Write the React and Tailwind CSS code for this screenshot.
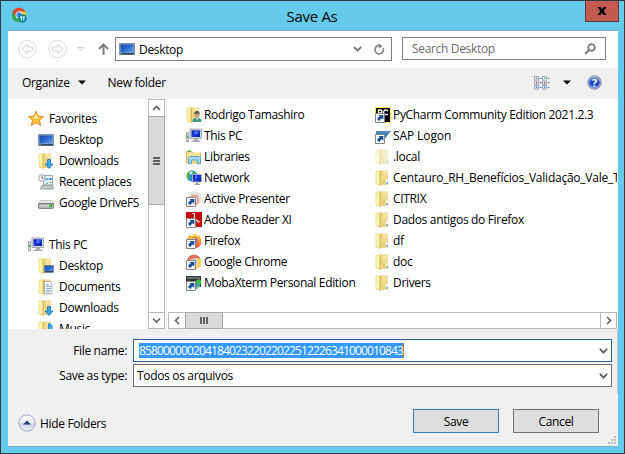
import React from "react";

const Svg = ({ w = 16, h = 16, children, className = "" }) => (
  <svg width={w} height={h} viewBox={`0 0 ${w} ${h}`} className={`block shrink-0 ${className}`}>
    {children}
  </svg>
);

const Defs = () => (
  <svg width="0" height="0" className="absolute">
    <defs>
      <linearGradient id="screen" x1="0" y1="0" x2="1" y2="1">
        <stop offset="0" stopColor="#1747a8" />
        <stop offset=".5" stopColor="#2f6bd6" />
        <stop offset="1" stopColor="#6ea4ee" />
      </linearGradient>
      <linearGradient id="mon" x1="0" y1="0" x2="1" y2="1">
        <stop offset="0" stopColor="#0a1a9c" />
        <stop offset=".5" stopColor="#1c3fe0" />
        <stop offset="1" stopColor="#0a1a8c" />
      </linearGradient>
      <linearGradient id="fold" x1="0" y1="0" x2="0" y2="1">
        <stop offset="0" stopColor="#f7eaaa" />
        <stop offset="1" stopColor="#e6c966" />
      </linearGradient>
      <linearGradient id="help" x1="0" y1="0" x2="0" y2="1">
        <stop offset="0" stopColor="#7fa0ee" />
        <stop offset=".5" stopColor="#1b3fc4" />
        <stop offset="1" stopColor="#4479e4" />
      </linearGradient>
      <linearGradient id="orb" x1="0" y1="0" x2="0" y2="1">
        <stop offset="0" stopColor="#ffffff" />
        <stop offset=".5" stopColor="#e8ebf4" />
        <stop offset=".55" stopColor="#cdd4e4" />
        <stop offset="1" stopColor="#f2f5fb" />
      </linearGradient>
      <linearGradient id="fox" x1="0" y1="0" x2="0" y2="1">
        <stop offset="0" stopColor="#ffd83a" />
        <stop offset=".5" stopColor="#ff9a2a" />
        <stop offset="1" stopColor="#f0345c" />
      </linearGradient>
    </defs>
  </svg>
);

const FolderShape = () => (
  <>
    <path d="M5 .8h7.500v13.700H5z" fill="url(#fold)" stroke="#e6d287" strokeWidth=".6" />
    <path d="M.8 1 5 .5l3 1.300V14.500L5 15.700.8 14z" fill="#dfc56c" />
    <path d="M1 1.200 4.800.8V14.800L1 13.700z" fill="#fbf2ac" stroke="#ead88c" strokeWidth=".5" />
    <path d="M5.600 3 7.600 1.800v12.500l-2 .9z" fill="#f0dc8c" />
    <path d="M4.800 1.500h.8v13.800h-.8z" fill="#cdb052" />
  </>
);
const Folder = () => (
  <Svg>
    <FolderShape />
    <path d="M10.800 9h1.700v5h-1.700z" fill="#f7f9fb" />
    <path d="M11.500 12h1.300v2h-1.300z" fill="#419fdb" />
  </Svg>
);
const PaleFolder = () => (
  <Svg className="opacity-50">
    <FolderShape />
    <path d="M10.800 9h1.700v5h-1.700z" fill="#f7f9fb" />
    <path d="M11.500 11.500h1.300v2.500h-1.300z" fill="#419fdb" />
  </Svg>
);
const DownFolder = () => (
  <Svg>
    <FolderShape />
    <path d="M9.500 6.500h3V11H15l-4 4.500L7 11h2.500z" fill="#35a5ea" stroke="#1976b8" strokeWidth=".8" />
  </Svg>
);
const DeskFolder = () => (
  <Svg>
    <FolderShape />
    <path d="M6.500 7.500h9v7h-9z" fill="url(#screen)" stroke="#6d8095" strokeWidth=".8" />
    <path d="M7 13h8v1H7z" fill="#31465f" />
  </Svg>
);
const DocFolder = () => (
  <Svg>
    <FolderShape />
    <path d="M6.500 2.500H12L14 5v10H6.500z" fill="#f7fafc" stroke="#97a2ab" strokeWidth=".8" />
    <path d="M8 5.500h3M8 7.500h5M8 9.500h5M8 11.500h5M8 13.200h4" stroke="#7fa0c0" strokeWidth=".9" />
  </Svg>
);
const MusicFolder = () => (
  <Svg>
    <FolderShape />
    <path d="M11 2v10M11 3q4 2 2 6" stroke="#2c9be6" strokeWidth="2" fill="none" />
    <circle cx="9.500" cy="12.500" r="2" fill="#2c9be6" />
  </Svg>
);
const UserFolder = () => (
  <Svg>
    <FolderShape />
    <path d="M6.500 15v-2q1-2.500 4.500-2.500t4.500 2.500v2z" fill="#459c87" />
    <circle cx="11" cy="7.500" r="2.700" fill="#c89e78" />
    <path d="M8.300 7q0-3 2.700-3t2.700 3q-3-1-5.400 0z" fill="#5d5247" />
    <path d="m9.800 11 1.300 2 1.300-2z" fill="#eee" />
  </Svg>
);
const Desktop = () => (
  <Svg>
    <path d="M.5 2.500h15v11H.5z" fill="#8ca3bd" stroke="#8294aa" />
    <path d="M1.500 3.500h13v8h-13z" fill="url(#screen)" />
    <path d="M1 12h14v1.500H1z" fill="#2f4561" />
    <path d="M1 12h2v1H1z" fill="#58a457" />
  </Svg>
);
const Star = () => (
  <Svg>
    <g transform="translate(0 -.6)">
      <path d="M8 .7 10.100 5.700 15.500 6.200 11.500 9.800 12.700 15.200 8 12.400 3.300 15.200 4.500 9.800.5 6.200 5.900 5.700z" fill="#fdbd3b" stroke="#df7d1d" strokeWidth=".8" />
      <path d="M8 2.500 9.400 6.500l3.600.4-5 1.600-4.500-1.600 3-.3z" fill="#ffe99b" />
    </g>
  </Svg>
);
const Recent = () => (
  <Svg>
    <path d="M5.500 1.500h9v9.500h-9z" fill="#eaf1f5" stroke="#9aa5ac" />
    <path d="M7.500 4h3v2.500h-3zM8 8.500h2v1.500H8z" fill="#72b5dd" />
    <path d="M11.500 4h2v2h-2z" fill="#2a73d0" />
    <path d="M11.500 8h2v1h-2z" fill="#75a667" />
    <path d="M3.500 11.500h11l1 3.500h-13z" fill="#c5c9cc" stroke="#8e9396" strokeWidth=".8" />
    <circle cx="4" cy="4" r="3.300" fill="#fafcff" stroke="#969fa8" />
    <path d="M4 2v2.300h2" fill="none" stroke="#5d6670" strokeWidth=".9" />
  </Svg>
);
const Drive = () => (
  <Svg>
    <path d="M2.500 5.500h11L15.500 9H.5z" fill="#e6e6e6" stroke="#bbb" strokeWidth=".8" />
    <path d="M.5 8.500h15v4q0 1-1 1h-13q-1 0-1-1z" fill="#999" stroke="#747474" strokeWidth=".8" />
    <path d="M1.500 9.500h13v3h-13z" fill="#c9c9c9" />
    <path d="M11 9.500h3v2.500h-3z" fill="#2ba12c" />
    <path d="M11.500 10h1v1.500h-1z" fill="#74ed5c" />
  </Svg>
);
const Pc = () => (
  <Svg>
    <path d="M.5 4.500h2v9.500h-2z" fill="#d4d8db" stroke="#969b9f" strokeWidth=".8" />
    <path d="M.8 8h1.500v2H.8z" fill="#48b545" />
    <path d="M4 1h11.500v9.500H4z" fill="#d3d7de" stroke="#a6abb4" />
    <path d="M5.500 2.300h8.500v6.700H5.500z" fill="url(#mon)" />
    <path d="M8.500 3h3v3h-3z" fill="#507bf4" />
    <path d="M8 11h4v1.500h2.500V14H5.500v-1.500H8z" fill="#a9adb2" />
  </Svg>
);
const Libraries = () => (
  <Svg>
    <path d="M.5 2.500h5l1 1.500h8v10H.5z" fill="#f4de8c" stroke="#d1b25a" />
    <path d="M2 1.500h3v1.500H2z" fill="#5daf56" />
    <path d="M7 3h7v1.500H7z" fill="#fcf2bd" />
    <path d="M2.500 14.500V9L4 7.500h9L14.500 9v5.500h-3V11h-6v3.500z" fill="#9fd7f3" stroke="#529fd0" strokeWidth=".9" />
  </Svg>
);
const Network = () => (
  <Svg>
    <circle cx="6" cy="6" r="5.500" fill="#258fd4" />
    <path d="M1 4q2-4 5-3.500L5 4 3 5.500 4 9l-1 1Q0 7 1 4zM7 1q4 1 4.500 4L8 4z" fill="#52b849" />
    <path d="M3 2.500Q5 .5 7 2L5 5z" fill="#bfe9f0" />
    <path d="M6.500 4.500h9v7.500h-9z" fill="url(#mon)" stroke="#a8b2c5" />
    <path d="M9 5.500h2v3H9z" fill="#537bf2" />
    <path d="M10 12.500h2.500V14h1.500v1H8.500v-1H10z" fill="#9da3ac" />
  </Svg>
);

// Shortcut overlay drawn in the lower left corner of an icon
const Arrow = () => (
  <>
    <path d="M.5 6.500h9v9h-9z" fill="#fafafa" stroke="#858585" />
    <path d="M3.500 8H8.300V12.700L6.800 11.300Q5 12.300 4.500 14 2 13 2.300 11.500 3 10 4.900 9.500z" fill="#174d94" />
  </>
);
const ActiveP = () => (
  <Svg>
    <circle cx="8.500" cy="7.500" r="7.300" fill="#e4e2e2" />
    <path d="M5 7.500q0-3 3.500-3t3.500 4-2.500 5" stroke="#ed9484" strokeWidth="1.600" fill="none" />
    <Arrow />
  </Svg>
);
const Adobe = () => (
  <Svg>
    <path d="M0 0h16v15H0z" fill="#c80b10" />
    <path d="M6.500 1.500h2v3.500M8 5q1 3.500 5 4.500" stroke="#fff" strokeWidth="1.100" fill="none" />
    <path d="M11 9h3v1.500h-3z" fill="#f8b0aa" />
    <Arrow />
  </Svg>
);
const Firefox = () => (
  <Svg>
    <path d="M2 4 4 1.500 6 3.500Q8 1 9.500 0q0 2 2 3l1-1q3 3 3 6.500 0 5-6 6.800Q1 15 1 8z" fill="url(#fox)" />
    <circle cx="8" cy="7.500" r="3.300" fill="#8352e3" />
    <path d="M4 6q3-3 6 0l-3 1.500z" fill="#ffbb31" />
    <Arrow />
  </Svg>
);
const ChromeShape = () => (
  <>
    <circle cx="8" cy="8" r="7.300" fill="#38a653" />
    <path d="M1.600 4.500A7.300 7.300 0 0 1 14.400 4.500H8L5 9.500z" fill="#e34636" />
    <path d="M14.400 4.500A7.300 7.300 0 0 1 8 15.300L11 9.500 8 4.500z" fill="#fbc62c" />
    <circle cx="8" cy="8" r="3.500" fill="#fff" />
    <circle cx="8" cy="8" r="2.700" fill="#4285ec" />
  </>
);
const Chrome = () => (
  <Svg>
    <g opacity=".78"><ChromeShape /></g>
    <Arrow />
  </Svg>
);
const Moba = () => (
  <Svg>
    <path d="M0 1h15v11H0z" fill="#343739" />
    <path d="M1 2h13v2H1z" fill="#697073" />
    <path d="M9 6 14 4l1.500 4-4 3z" fill="#3dc143" />
    <path d="m10 10 4-1-1 4-5 2z" fill="#47a9de" />
    <path d="m11 12 3-1-2 3z" fill="#c9dc4d" />
    <Arrow />
  </Svg>
);
const PyCharm = () => (
  <Svg>
    <path d="M.5.5h15v15H.5z" fill="#050505" stroke="#f2ee53" />
    <path d="M3.500 8V3h2q1.500 0 1.500 1.500T5.500 6h-2M13 4q-3-2-4 0t0 3 4 .5" fill="none" stroke="#fff" strokeWidth="1.300" />
    <Arrow />
  </Svg>
);
const Sap = () => (
  <Svg>
    <path d="M1 3h15L8.500 12H1z" fill="#3f7fb2" />
    <path d="M1 3h15l-2 2H1z" fill="#4e8fc2" />
    <Arrow />
  </Svg>
);

const Chevron = ({ d = "down" }) => (
  <Svg w={9} h={9} className="text-[#606060]">
    <path
      d={{ down: "M1 2.500 4.500 6 8 2.500", up: "M1 6 4.500 2.500 8 6", left: "M6 1 2.500 4.500 6 8", right: "M3 1 6.500 4.500 3 8" }[d]}
      fill="none" stroke="currentColor" strokeWidth="1.600"
    />
  </Svg>
);
const ComboArrow = ({ className = "text-[#606060]" }) => (
  <Svg w={9} h={8} className={className}>
    <path d="M1 1.500v1.500L4.500 6.500 8 3V1.500L4.500 4.500z" fill="currentColor" stroke="currentColor" strokeWidth=".8" />
  </Svg>
);

const favorites = [["Desktop", Desktop], ["Downloads", DownFolder], ["Recent places", Recent], ["Google DriveFS", Drive]];
const thisPc = [["Desktop", DeskFolder], ["Documents", DocFolder], ["Downloads", DownFolder], ["Music", MusicFolder]];
const left = [
  ["Rodrigo Tamashiro", UserFolder], ["This PC", Pc], ["Libraries", Libraries], ["Network", Network], ["Active Presenter", ActiveP],
  ["Adobe Reader XI", Adobe], ["Firefox", Firefox], ["Google Chrome", Chrome], ["MobaXterm Personal Edition", Moba],
];
const right = [
  ["PyCharm Community Edition 2021.2.3", PyCharm], ["SAP Logon", Sap, "tracking-[-0.1px]"], [".local", PaleFolder],
  ["Centauro_RH_Benefícios_Validação_Vale_T", Folder, "tracking-[-0.24px]"], ["CITRIX", Folder], ["Dados antigos do Firefox", Folder],
  ["df", Folder], ["doc", Folder], ["Drivers", Folder],
];

const Row = ({ item: [label, Icon, tracking = ""], indent = "", gap = "gap-[2px]" }) => (
  <div className={`flex h-[21px] items-start whitespace-nowrap ${gap} ${indent}`}>
    <div className="pt-[3px]"><Icon /></div>
    <span className={`pt-[2px] ${tracking}`}>{label}</span>
  </div>
);

const Field = ({ label, border, children }) => (
  <div className="flex h-[23px] items-center">
    <div className="w-[125px] pr-[6px] text-right">{label}</div>
    <div className={`flex h-[23px] w-[479px] items-center justify-between border bg-white pr-[3px] ${border}`}>
      {children}
      <ComboArrow />
    </div>
  </div>
);

export default function App() {
  return (
    <div className="flex h-[454px] w-[625px] flex-col overflow-hidden border border-[#323a40] bg-[#66cbea] font-['Open_Sans','Noto_Sans',sans-serif] text-[12px] leading-[17px] tracking-[-0.33px] text-black">
      <Defs />
      <header className="flex h-[29px] shrink-0">
        <div className="w-[120px] pt-[6px] pl-[10px]">
          <Svg w={17} h={17}>
            <ChromeShape />
            <circle cx="11.500" cy="11.500" r="4.200" fill="#078c99" />
            <path d="M9 10h5M10.500 10v3.500M12.800 10v3.500" stroke="#fff" strokeWidth=".9" fill="none" />
          </Svg>
        </div>
        <h1 className="flex-1 pt-[5px] pr-[1px] text-center text-[15px] leading-[20px] tracking-[-0.3px]">Save As</h1>
        <div className="flex w-[120px] justify-end pr-[5px]">
          <button className="flex h-[21px] w-[34px] items-center justify-center border border-t-0 border-[#633a3c] bg-[#c45b51]">
            <Svg w={10} h={8}><path d="M.5 0h3L5 2.300 6.500 0h3L6.700 4l2.800 4h-3L5 5.700 3.500 8h-3l2.800-4z" fill="#000" /></Svg>
          </button>
        </div>
      </header>

      <main className="mr-[6px] ml-[7px] flex h-[417px] flex-col border-t border-b border-[#78aec5] bg-[#f0f0f0]">
        <div className="flex h-[37px] shrink-0 items-start bg-white pt-[6px] pl-[10px]">
          <Svg w={19} h={24}>
            <circle cx="9.500" cy="12" r="8.700" fill="none" stroke="#dcdcdc" />
            <path d="M4 12 9 7.500V10h5.500v4H9v2.500z" fill="none" stroke="#d4d4d4" />
          </Svg>
          <Svg w={19} h={24} className="ml-[11px]">
            <circle cx="9.500" cy="12" r="8.700" fill="none" stroke="#dcdcdc" />
            <path d="M15 12 10 7.500V10H4.500v4H10v2.500z" fill="none" stroke="#d4d4d4" />
          </Svg>
          <Svg w={8} h={24} className="ml-[10px]"><path d="M1 10.500h6L4 13.500z" fill="none" stroke="#ccc" /></Svg>
          <Svg w={11} h={24} className="ml-[13px]"><path d="M5.500 18V7.500M1 12 5.500 7.500 10 12" fill="none" stroke="#808080" strokeWidth="2" /></Svg>
          <div className="ml-[6px] flex h-[24px] w-[277px] items-center border border-[#7f7f7f] pl-[3px]">
            <Desktop />
            <span className="ml-[4px] flex-1">Desktop</span>
            <ComboArrow className="text-[#777]" />
            <Svg w={12} h={13} className="mr-[6px] ml-[11px]">
              <path d="M8.500 3.200A4.200 4.200 0 1 1 3.500 3.200" transform="rotate(35 6 7)" fill="none" stroke="#858585" strokeWidth="1.700" />
              <path d="M5.500.5 9.500 3 6 5.500z" fill="#808080" />
            </Svg>
          </div>
          <div className="ml-[10px] flex h-[23px] w-[204px] items-center justify-between border border-[#7f7f7f] pr-[9px] pl-[9px] text-[#6d6d6d]">
            <span>Search Desktop</span>
            <Svg w={12} h={12}>
              <circle cx="7.500" cy="4.500" r="3.300" fill="none" stroke="#808080" strokeWidth="1.900" />
              <path d="M5 7 1 11" stroke="#808080" strokeWidth="2.200" />
            </Svg>
          </div>
        </div>

        <div className="flex h-[31px] shrink-0 items-center pr-[16px] pb-[2px] pl-[14px]">
          <span>Organize</span>
          <Svg w={8} h={5} className="ml-[8px]"><path d="M0 .5h8L4 4.500z" /></Svg>
          <span className="ml-[22px] flex-1">New folder</span>
          <Svg w={16} h={14}>
            {[0, 8].map((x) => [0, 4.5, 9].map((y, i) => (
              <g key={`${x}-${y}`}>
                <path d={`M${x + 0.5} ${y + 0.5}h4v3.500h-4z`} fill="#fff" stroke="#8ca0b8" strokeWidth=".9" />
                <path d={`M${x + 1.8} ${y + 1.5}h1.500v1.500h-1.500z`} fill={["#539d66", "#e41f1f", "#3467c9"][i]} />
                <path d={`M${x + 5.5} ${y + 2.3}h2`} stroke="#596b80" />
              </g>
            )))}
          </Svg>
          <Svg w={8} h={5} className="ml-[13px]"><path d="M0 .5h8L4 4.500z" /></Svg>
          <svg width="15" height="15" viewBox="0 0 15 15" className="ml-[16px] block">
            <circle cx="7.500" cy="7.500" r="6.600" fill="url(#help)" stroke="#8b929f" strokeWidth="1.200" />
            <circle cx="7.500" cy="7.500" r="5.600" fill="none" stroke="#dbe5fa" strokeWidth=".7" />
            <text x="7.500" y="11.500" textAnchor="middle" fill="#fff" fontSize="11" fontWeight="700">?</text>
          </svg>
        </div>

        <div className="flex h-[230px] shrink-0 bg-white">
          <nav className="h-[230px] w-[140px] overflow-hidden pt-[9px]">
            <Row item={["Favorites", Star]} indent="pl-[20px]" gap="gap-[5px]" />
            {favorites.map((f) => <Row key={f[0]} item={f} indent="pl-[30px]" gap="gap-[5px]" />)}
            <div className="h-[21px]" />
            <Row item={["This PC", Pc]} indent="pl-[20px]" gap="gap-[5px]" />
            {thisPc.map((f) => <Row key={f[0]} item={f} indent="pl-[30px]" gap="gap-[5px]" />)}
          </nav>
          <div className="flex w-[17px] flex-col border border-[#b9b9b9]">
            <div className="flex h-[16px] items-center justify-center"><Chevron d="up" /></div>
            <div className="-mx-px flex h-[89px] flex-col items-center justify-center gap-[1px] border border-[#a8a8a8] bg-[#dadada]">
              <i className="h-[2px] w-[7px] bg-[#606060]" />
              <i className="h-[2px] w-[7px] bg-[#606060]" />
              <i className="h-[2px] w-[7px] bg-[#606060]" />
            </div>
            <div className="flex-1" />
            <div className="flex h-[16px] items-center justify-center border-t border-[#b9b9b9]"><Chevron /></div>
          </div>
          <div className="ml-[1px] w-[2px] border-l border-[#f0f0f0]" />
          <section className="flex w-[449px] flex-col">
            <div className="flex h-[213px] overflow-hidden pt-[5px]">
              <div className="w-[190px] shrink-0 pl-[18px]">{left.map((f) => <Row key={f[0]} item={f} />)}</div>
              <div className="w-[259px] shrink-0 overflow-hidden pl-[17px]">{right.map((f) => <Row key={f[0]} item={f} />)}</div>
            </div>
            <div className="flex h-[17px] border border-[#b9b9b9]">
              <div className="flex w-[16px] items-center justify-center"><Chevron d="left" /></div>
              <div className="-my-px flex w-[38px] items-center justify-center gap-[1px] border border-[#a8a8a8] bg-[#dadada]">
                <i className="h-[7px] w-[2px] bg-[#606060]" />
                <i className="h-[7px] w-[2px] bg-[#606060]" />
                <i className="h-[7px] w-[2px] bg-[#606060]" />
              </div>
              <div className="flex-1" />
              <div className="flex w-[16px] items-center justify-center border-l border-[#b9b9b9]"><Chevron d="right" /></div>
            </div>
          </section>
        </div>

        <div className="flex h-[65px] shrink-0 flex-col gap-[2px] border-r border-[#c6c6c6] pt-[10px]">
          <Field label="File name:" border="border-[#2a628f]">
            <span className="ml-[5px] h-[15px] border-r border-[#cc6d20] bg-[#3399ff] leading-[15px] tracking-[-0.86px] text-white">85800000020418402322022022512226341000010843</span>
          </Field>
          <Field label="Save as type:" border="border-[#6d6d6d]">
            <span className="ml-[3px]">Todos os arquivos</span>
          </Field>
        </div>

        <footer className="flex flex-1 pl-[10px]">
          <div className="mt-[19px] flex h-[20px] items-center">
            <Svg w={18} h={18}>
              <circle cx="9" cy="9" r="8.200" fill="url(#orb)" stroke="#9ea9c0" />
              <path d="M5 10.500 9 6.500l4 4z" fill="#243f7d" />
            </Svg>
            <span className="ml-[4px] pt-[1px]">Hide Folders</span>
          </div>
          <div className="mt-[15px] mr-[3px] ml-auto flex gap-[14px]">
            <button className="h-[24px] w-[86px] border border-[#3c7fb1] bg-[#dddddd]">Save</button>
            <button className="h-[24px] w-[86px] border border-[#707070] bg-[#dddddd]">Cancel</button>
          </div>
          <Svg w={9} h={9} className="mt-auto mr-[2px] mb-[2px] ml-[5px]">
            <path d="M7 1h2v2H7zM4 4h2v2H4zM7 4h2v2H7zM1 7h2v2H1zM4 7h2v2H4zM7 7h2v2H7z" fill="#bdbdbd" />
          </Svg>
        </footer>
      </main>
    </div>
  );
}
